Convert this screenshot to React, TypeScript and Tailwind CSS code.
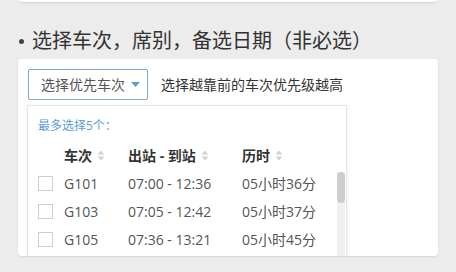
const trains = [
  { code: 'G101', time: '07:00 - 12:36', dur: '05小时36分' },
  { code: 'G103', time: '07:05 - 12:42', dur: '05小时37分' },
  { code: 'G105', time: '07:36 - 13:21', dur: '05小时45分' },
];

const SortIcon = () => (
  <svg width="8" height="11" viewBox="0 0 8 11" className="ml-[5px] shrink-0">
    <path d="M4 0.5 L7.5 4.5 L0.5 4.5 Z" fill="#d2d2d2" />
    <path d="M4 10.5 L7.5 6.5 L0.5 6.5 Z" fill="#d2d2d2" />
  </svg>
);

export default function App() {
  return (
    <div className="w-[456px] h-[272px] overflow-hidden bg-[#ececec] font-['Open_Sans','Noto_Sans_CJK_SC',sans-serif]">
      {/* tail of the card above */}
      <div className="mx-[20px] h-[2px] bg-white rounded-b shadow-[0_1px_2px_rgba(0,0,0,0.12)]" />

      {/* section title */}
      <div className="flex items-center h-[26px] mt-[26px] pl-[19px] text-[20px] leading-[26px] text-[#333]">
        <span className="w-[5px] h-[5px] rounded-full bg-[#444] mr-[8px]" />
        <span>选择车次，席别，备选日期（非必选）</span>
      </div>

      {/* card */}
      <div className="mt-[5px] mx-[18px] h-[197px] bg-white rounded-[4px] shadow-[0_1px_2px_rgba(0,0,0,0.1)] overflow-hidden px-[10px] pt-[10px]">
        <div className="flex items-center gap-[13px]">
          <div className="flex items-center justify-between w-[120px] h-[31px] border border-[#80a6d6] rounded-[2px] pl-[12px] pr-[7px] text-[14px] text-[#555]">
            <span>选择优先车次</span>
            <svg width="9" height="5" viewBox="0 0 9 5">
              <path d="M0 0 L9 0 L4.5 5 Z" fill="#5b9ad8" />
            </svg>
          </div>
          <span className="text-[14px] text-[#333]">选择越靠前的车次优先级越高</span>
        </div>

        {/* dropdown */}
        <div className="relative mt-[5px] -ml-[1px] w-[320px] h-[160px] bg-white border border-[#e6e6e6] shadow-[0_1px_4px_rgba(0,0,0,0.08)] pl-[10px]">
          <div className="pt-[11px] h-[35px] text-[12px] leading-[18px] text-[#5b9ad8]">最多选择5个：</div>

          <div className="flex items-center h-[28px] text-[14px] font-bold text-[#333]">
            <span className="w-[26px]" />
            <span className="flex items-center w-[64px]">车次<SortIcon /></span>
            <span className="flex items-center w-[114px]">出站 - 到站<SortIcon /></span>
            <span className="flex items-center">历时<SortIcon /></span>
          </div>

          {trains.map((t) => (
            <div key={t.code} className="flex items-center h-[28px] text-[14px] text-[#555]">
              <span className="w-[26px]">
                <span className="block w-[15px] h-[15px] border border-[#cfcfcf] bg-white" />
              </span>
              <span className="w-[64px]">{t.code}</span>
              <span className="w-[114px]">{t.time}</span>
              <span>{t.dur}</span>
            </div>
          ))}

          {/* scrollbar */}
          <div className="absolute right-[1px] top-[66px] bottom-0 w-[8px] bg-[#f0f0f0]">
            <div className="h-[31px] rounded-[4px] bg-[#cdcdcd]" />
          </div>
        </div>
      </div>
    </div>
  );
}
